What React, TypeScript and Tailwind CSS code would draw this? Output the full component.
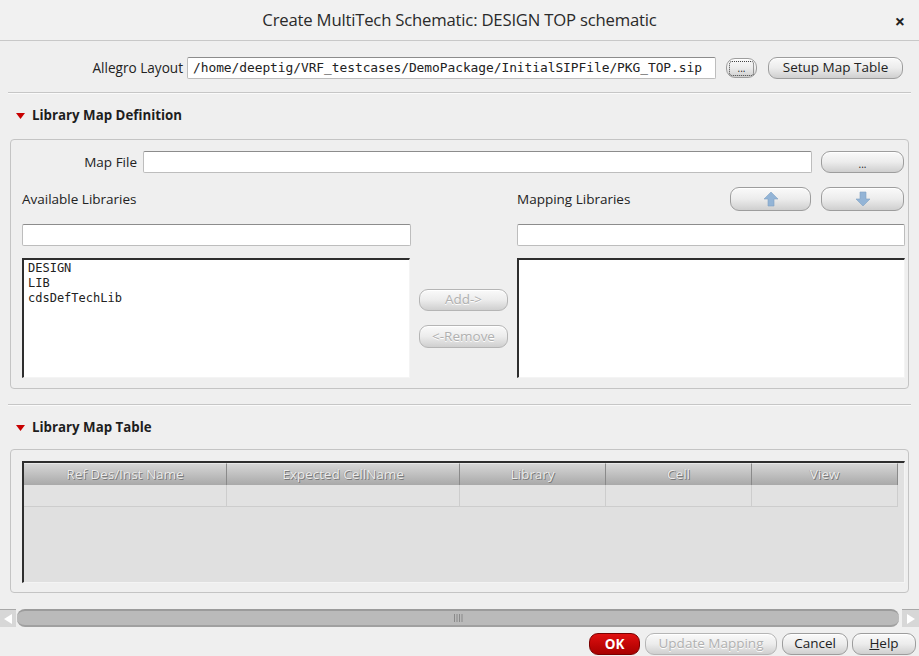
import React from "react";

const font = "font-['Open_Sans','Noto_Sans',sans-serif]";

function Btn({
  children,
  className = "",
  disabled = false,
}: {
  children?: React.ReactNode;
  className?: string;
  disabled?: boolean;
}) {
  return (
    <div
      className={
        "flex items-center justify-center rounded-[9px] border border-[#9d9d9d] bg-gradient-to-b from-[#fafafa] via-[#ececec] to-[#cfcfcf] shadow-[inset_0_1px_0_#ffffff] text-[13.5px] leading-none " +
        (disabled
          ? "text-[#b0b0b0] [text-shadow:0_1px_0_#ffffff] border-[#b5b5b5] from-[#ececec] via-[#e0e0e0] to-[#c6c6c6] "
          : "text-[#222] ") +
        className
      }
    >
      {children}
    </div>
  );
}

function Triangle() {
  return (
    <svg width="9" height="6" viewBox="0 0 9 6" className="mr-[7px]">
      <polygon points="0,0 9,0 4.5,6" fill="#c80000" />
    </svg>
  );
}

function Arrow({ up }: { up: boolean }) {
  return (
    <svg width="16" height="16" viewBox="0 0 16 16">
      <g transform={up ? "" : "rotate(180 8 8)"}>
        <polygon
          points="8,1 15,8 11,8 11,15 5,15 5,8 1,8"
          fill="#93b4d6"
          stroke="#80a2c4"
          strokeWidth="0.6"
        />
      </g>
    </svg>
  );
}

function TextInput({ className = "", children }: { className?: string; children?: React.ReactNode }) {
  return (
    <div
      className={
        "bg-white border border-[#bdbdbd] border-t-[#8c8c8c] rounded-[2px] flex items-center " + className
      }
    >
      {children}
    </div>
  );
}

export default function App() {
  const cols = [
    { w: 203, t: "Ref Des/Inst Name" },
    { w: 233, t: "Expected CellName" },
    { w: 146, t: "Library" },
    { w: 146, t: "Cell" },
    { w: 146, t: "View" },
  ];
  return (
    <div className={"w-[919px] h-[656px] bg-[#efefef] flex flex-col overflow-hidden text-[#222] " + font}>
      {/* Title bar */}
      <div className="h-[41px] shrink-0 border-b border-[#c8c8c8] bg-[#f1f1f1] relative flex items-center justify-center">
        <span className="text-[16.7px] text-[#2a2a2a] tracking-[-0.2px]">
          Create MultiTech Schematic: DESIGN TOP schematic
        </span>
        <span className="absolute right-[14px] top-[8px] text-[18px] font-bold text-[#222]">×</span>
      </div>

      {/* Allegro Layout row */}
      <div className="mt-[16px] h-[22px] flex items-center justify-end pr-[16px]">
        <span className="text-[13.6px] mr-[4px]">Allegro Layout</span>
        <TextInput className="w-[529px] h-[22px] pl-[5px]">
          <span className="font-['DejaVu_Sans_Mono',monospace] text-[12.9px] text-[#222] tracking-[-0.05px]">
            /home/deeptig/VRF_testcases/DemoPackage/InitialSIPFile/PKG_TOP.sip
          </span>
        </TextInput>
        <Btn className="ml-[10px] w-[31px] h-[20px] rounded-[7px]">
          <div className="w-[25px] h-[15px] border border-dotted border-[#444] rounded-[3px] flex items-end justify-center pb-[2px] text-[10px]">
            ...
          </div>
        </Btn>
        <Btn className="ml-[11px] w-[135px] h-[22px]">Setup Map Table</Btn>
      </div>

      {/* separator */}
      <div className="mt-[13px] mx-[8px] h-px bg-[#c6c6c6] shadow-[0_1px_0_#fafafa]" />

      {/* Library Map Definition header */}
      <div className="mt-[11px] h-[24px] flex items-center pl-[16px]">
        <Triangle />
        <span className="text-[13.3px] font-bold text-[#1e1e1e]">Library Map Definition</span>
      </div>

      {/* Group box 1 */}
      <div className="mt-[11px] mx-[10px] h-[250px] border border-[#c4c4c4] rounded-[4px] flex flex-col">
        {/* Map file row */}
        <div className="mt-[11px] h-[22px] flex items-center">
          <span className="w-[126px] text-right text-[13.5px]">Map File</span>
          <TextInput className="ml-[6px] w-[669px] h-[22px]" />
          <Btn className="ml-[9px] w-[83px] h-[22px]">
            <span className="text-[10px] pt-[4px]">...</span>
          </Btn>
        </div>
        {/* labels row */}
        <div className="mt-[14px] h-[24px] flex items-center">
          <span className="ml-[11px] w-[495px] text-[13.5px]">Available Libraries</span>
          <span className="w-[213px] text-[13.5px]">Mapping Libraries</span>
          <Btn className="w-[81px] h-[24px]">
            <Arrow up />
          </Btn>
          <Btn className="ml-[10px] w-[83px] h-[24px]">
            <Arrow up={false} />
          </Btn>
        </div>
        {/* filters */}
        <div className="mt-[13px] h-[22px] flex">
          <TextInput className="ml-[11px] w-[389px] h-[22px]" />
          <TextInput className="ml-[106px] w-[388px] h-[22px]" />
        </div>
        {/* lists */}
        <div className="mt-[12px] h-[120px] flex">
          <div className="ml-[11px] w-[388px] h-[120px] bg-white border-t-2 border-l-2 border-[#2e2e2e] border-r border-b border-r-[#f4f4f4] border-b-[#f4f4f4] pl-[4px] pt-[1px] font-['DejaVu_Sans_Mono',monospace] text-[12px] leading-[15px] text-[#222]">
            <div>DESIGN</div>
            <div>LIB</div>
            <div>cdsDefTechLib</div>
          </div>
          <div className="w-[107px] flex flex-col items-center pt-[31px]">
            <Btn disabled className="w-[89px] h-[22px]">
              Add-&gt;
            </Btn>
            <Btn disabled className="mt-[14px] w-[89px] h-[23px]">
              &lt;-Remove
            </Btn>
          </div>
          <div className="w-[388px] h-[120px] bg-white border-t-2 border-l-2 border-[#2e2e2e] border-r border-b border-r-[#f4f4f4] border-b-[#f4f4f4]" />
        </div>
      </div>

      {/* separator */}
      <div className="mt-[15px] mx-[8px] h-px bg-[#c6c6c6] shadow-[0_1px_0_#fafafa]" />

      {/* Library Map Table header */}
      <div className="mt-[11px] h-[24px] flex items-center pl-[16px]">
        <Triangle />
        <span className="text-[13.3px] font-bold text-[#1e1e1e]">Library Map Table</span>
      </div>

      {/* Group box 2 */}
      <div className="mt-[9px] mx-[10px] h-[144px] border border-[#c4c4c4] rounded-[4px] pt-[11px] pl-[11px]">
        <div className="w-[883px] h-[122px] bg-[#e0e0e0] border-t-2 border-l-2 border-[#2e2e2e] border-r border-b border-r-[#f4f4f4] border-b-[#f4f4f4] flex flex-col">
          <div className="h-[22px] flex">
            {cols.map((c, i) => (
              <div
                key={i}
                style={{ width: c.w }}
                className="h-[22px] border-r border-[#8a8a8a] border-t border-t-[#e8e8e8] bg-gradient-to-b from-[#d6d6d6] to-[#a9a9a9] flex items-center justify-center text-[13.5px] text-[#ececec] [text-shadow:1px_1px_0_#7a7a7a,-0.5px_-0.5px_0_#9c9c9c]"
              >
                {c.t}
              </div>
            ))}
          </div>
          <div className="h-[22px] flex">
            {cols.map((c, i) => (
              <div
                key={i}
                style={{ width: c.w }}
                className="h-[22px] border-r border-b border-[#cdcdcd] bg-[#e2e2e2]"
              />
            ))}
          </div>
        </div>
      </div>

      {/* Scrollbar */}
      <div className="mt-[16px] h-[18px] flex">
        <div className="w-[16px] h-[18px] bg-[#d7d7d7] border-t border-[#a8a8a8] flex items-center justify-center">
          <svg width="8" height="10" viewBox="0 0 8 10">
            <polygon points="8,0 0,5 8,10" fill="#ffffff" />
          </svg>
        </div>
        <div className="ml-[1px] w-[882px] h-[18px] bg-[#bababa] border-t-2 border-b-2 border-t-[#9b9b9b] border-b-[#a0a0a0] rounded-l-[8px] rounded-r-[8px] flex items-center justify-center">
          <svg width="11" height="8" viewBox="0 0 11 8">
            <path d="M1.5 0V8M4 0V8M6.5 0V8M9 0V8" stroke="#8a8a8a" strokeWidth="1" />
          </svg>
        </div>
        <div className="ml-[3px] w-[17px] h-[18px] bg-[#d7d7d7] border-t border-[#a8a8a8] flex items-center justify-center">
          <svg width="8" height="10" viewBox="0 0 8 10">
            <polygon points="0,0 8,5 0,10" fill="#ffffff" />
          </svg>
        </div>
      </div>

      {/* Bottom buttons */}
      <div className="mt-[6px] h-[22px] flex justify-end pr-[3px]">
        <div className="w-[51px] h-[22px] rounded-[9px] border border-[#7a0000] bg-gradient-to-b from-[#e01010] to-[#a80000] flex items-center justify-center text-white font-bold text-[13.5px]">
          OK
        </div>
        <Btn disabled className="ml-[5px] w-[132px] h-[22px]">
          Update Mapping
        </Btn>
        <Btn className="ml-[5px] w-[66px] h-[22px]">Cancel</Btn>
        <Btn className="ml-[4px] w-[64px] h-[22px]">
          <span>
            <span className="underline">H</span>elp
          </span>
        </Btn>
      </div>
    </div>
  );
}
